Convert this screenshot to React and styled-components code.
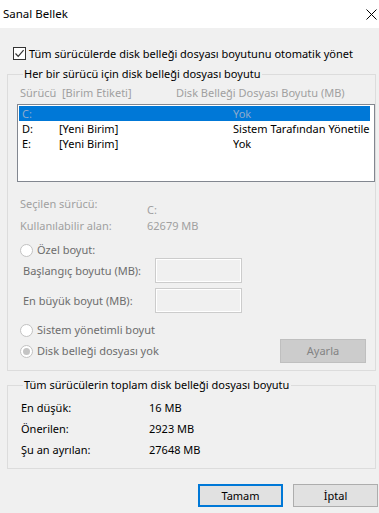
import React from "react";
import styled, { createGlobalStyle } from "styled-components";

const Global = createGlobalStyle`
  html, body { margin: 0; padding: 0; background: #f0f0f0; }
  body { font-family: "Noto Sans", "Segoe UI", sans-serif; font-size: 11px; color: #000; }
  * { box-sizing: border-box; }
`;

const Window = styled.div`
  width: 379px;
  height: 513px;
  display: flex;
  flex-direction: column;
  background: #f0f0f0;
  overflow: hidden;
`;

const TitleBar = styled.div`
  height: 28px;
  background: #fff;
  display: flex;
  align-items: center;
  justify-content: space-between;
  padding: 0 1px 0 3px;
`;

const Title = styled.span`
  font-size: 11.5px;
  line-height: 16px;
`;

const Close = styled.div`
  width: 12px;
  height: 12px;
  display: flex;
  align-items: center;
  justify-content: center;
  margin-right: 1px;
`;

const Body = styled.div`
  flex: 1;
  display: flex;
  flex-direction: column;
  padding: 19px 0 0 7px;
`;

const CheckRow = styled.label`
  display: flex;
  align-items: center;
  gap: 3px;
  padding-left: 6px;
  height: 13px;
  line-height: 16px;
  white-space: nowrap;
`;

const CheckBox = styled.span`
  width: 13px;
  height: 13px;
  border: 1px solid #333;
  background: #fff;
  display: flex;
  align-items: center;
  justify-content: center;
  flex: none;
`;

const Group = styled.fieldset`
  width: 369px;
  margin: ${(p) => p.$top}px 0 0 0;
  padding: 0 0 ${(p) => p.$bottom}px 9px;
  border: 1px solid #dcdcdc;
  min-width: 0;
  display: flex;
  flex-direction: column;
`;

const Legend = styled.legend`
  margin-left: 6px;
  padding: 0 2px 0 1px;
  line-height: 16px;
  white-space: nowrap;
`;

const ListHeader = styled.div`
  display: flex;
  margin-top: 3px;
  line-height: 16px;
  color: #a0a0a0;
  padding-left: 3px;
  white-space: nowrap;
`;

const HeadCell = styled.span`
  width: ${(p) => p.$w || "auto"};
  flex: none;
`;

const ListBox = styled.div`
  margin-top: 3px;
  height: 78px;
  border: 1px solid #828790;
  background: #fff;
  padding: 1px 4px 0 1px;
  overflow: hidden;
`;

const ListRow = styled.div`
  display: flex;
  height: 15px;
  line-height: 15px;
  padding-left: 3px;
  white-space: nowrap;
  overflow: hidden;
  background: ${(p) => (p.$selected ? "#0078d7" : "transparent")};
  color: ${(p) => (p.$selected ? "#8eaacb" : "#000")};
`;

const Cell = styled.span`
  width: ${(p) => p.$w || "auto"};
  flex: ${(p) => (p.$w ? "none" : "1 1 0")};
  min-width: 0;
  overflow: hidden;
`;

const InfoGrid = styled.div`
  display: grid;
  grid-template-columns: 127px auto;
  grid-template-rows: 22px 16px;
  margin-top: 14px;
  padding-left: 3px;
  line-height: 16px;
  color: #a0a0a0;
`;

const InfoValue = styled.span`
  align-self: ${(p) => (p.$low ? "end" : "start")};
`;

const RadioRow = styled.div`
  display: flex;
  align-items: center;
  gap: 4px;
  height: 16px;
  margin-top: ${(p) => p.$top || 0}px;
  padding-left: 3px;
  line-height: 16px;
  color: #6d6d6d;
  white-space: nowrap;
`;

const Radio = styled.span`
  width: 13px;
  height: 13px;
  border-radius: 50%;
  border: 1px solid #c2c2c2;
  background: #fff;
  display: flex;
  align-items: center;
  justify-content: center;
  flex: none;
  &::after {
    content: "";
    display: ${(p) => (p.$on ? "block" : "none")};
    width: 7px;
    height: 7px;
    border-radius: 50%;
    background: #c4c4c4;
  }
`;

const FieldRow = styled.div`
  display: flex;
  align-items: center;
  height: 25px;
  margin-top: ${(p) => p.$top || 0}px;
  padding-left: 6px;
  color: #6d6d6d;
  line-height: 16px;
`;

const FieldLabel = styled.span`
  width: 132px;
  flex: none;
  white-space: nowrap;
`;

const Input = styled.div`
  width: 87px;
  height: 25px;
  border: 1px solid #cccccc;
  box-shadow: inset 0 0 0 1px #fff;
  background: #f0f0f0;
`;

const BottomRow = styled.div`
  display: flex;
  align-items: center;
  justify-content: space-between;
  height: 24px;
  margin-top: 1px;
  padding-right: 9px;
`;

const Button = styled.div`
  width: ${(p) => p.$w || 85}px;
  height: ${(p) => p.$h || 23}px;
  display: flex;
  align-items: center;
  justify-content: center;
  background: ${(p) => (p.$disabled ? "#cccccc" : "#e1e1e1")};
  border: ${(p) => (p.$default ? "2px solid #0078d7" : p.$disabled ? "1px solid #bfbfbf" : "1px solid #adadad")};
  color: ${(p) => (p.$disabled ? "#838383" : "#000")};
  line-height: 16px;
`;

const StatGrid = styled.div`
  display: grid;
  grid-template-columns: 128px auto;
  row-gap: 5px;
  margin-top: 7px;
  padding-left: 4px;
  line-height: 16px;
`;

const Footer = styled.div`
  display: flex;
  justify-content: flex-end;
  gap: 10px;
  margin-top: 15px;
  padding-right: 1px;
`;

export default function App() {
  return (
    <Window>
      <Global />
      <TitleBar>
        <Title>Sanal Bellek</Title>
        <Close>
          <svg width="11" height="11" viewBox="0 0 11 11">
            <path d="M0.5 0.5 L10.5 10.5 M10.5 0.5 L0.5 10.5" stroke="#000" strokeWidth="1" fill="none" />
          </svg>
        </Close>
      </TitleBar>
      <Body>
        <CheckRow>
          <CheckBox>
            <svg width="11" height="11" viewBox="0 0 11 11">
              <path d="M1.5 5.5 L4.2 8.3 L9.6 2.2" stroke="#333" strokeWidth="1.2" fill="none" />
            </svg>
          </CheckBox>
          <span>Tüm sürücülerde disk belleği dosyası boyutunu otomatik yönet</span>
        </CheckRow>

        <Group $top={6} $bottom={7}>
          <Legend>Her bir sürücü için disk belleği dosyası boyutu</Legend>
          <ListHeader>
            <HeadCell $w="42px">Sürücü</HeadCell>
            <HeadCell $w="114px">[Birim Etiketi]</HeadCell>
            <HeadCell>Disk Belleği Dosyası Boyutu (MB)</HeadCell>
          </ListHeader>
          <ListBox>
            <ListRow $selected>
              <Cell $w="37px">C:</Cell>
              <Cell $w="174px"></Cell>
              <Cell>Yok</Cell>
            </ListRow>
            <ListRow>
              <Cell $w="37px">D:</Cell>
              <Cell $w="174px">[Yeni Birim]</Cell>
              <Cell>Sistem Tarafından Yönetilen</Cell>
            </ListRow>
            <ListRow>
              <Cell $w="37px">E:</Cell>
              <Cell $w="174px">[Yeni Birim]</Cell>
              <Cell>Yok</Cell>
            </ListRow>
          </ListBox>
          <InfoGrid>
            <span>Seçilen sürücü:</span>
            <InfoValue $low>C:</InfoValue>
            <span>Kullanılabilir alan:</span>
            <InfoValue>62679 MB</InfoValue>
          </InfoGrid>
          <RadioRow $top={8}>
            <Radio />
            <span>Özel boyut:</span>
          </RadioRow>
          <FieldRow>
            <FieldLabel>Başlangıç boyutu (MB):</FieldLabel>
            <Input />
          </FieldRow>
          <FieldRow $top={5}>
            <FieldLabel>En büyük boyut (MB):</FieldLabel>
            <Input />
          </FieldRow>
          <RadioRow $top={9}>
            <Radio />
            <span>Sistem yönetimli boyut</span>
          </RadioRow>
          <BottomRow>
            <RadioRow>
              <Radio $on />
              <span>Disk belleği dosyası yok</span>
            </RadioRow>
            <Button $disabled $w={86} $h={24}>Ayarla</Button>
          </BottomRow>
        </Group>

        <Group $top={6} $bottom={10}>
          <Legend>Tüm sürücülerin toplam disk belleği dosyası boyutu</Legend>
          <StatGrid>
            <span>En düşük:</span>
            <span>16 MB</span>
            <span>Önerilen:</span>
            <span>2923 MB</span>
            <span>Şu an ayrılan:</span>
            <span>27648 MB</span>
          </StatGrid>
        </Group>

        <Footer>
          <Button $default>Tamam</Button>
          <Button>İptal</Button>
        </Footer>
      </Body>
    </Window>
  );
}
